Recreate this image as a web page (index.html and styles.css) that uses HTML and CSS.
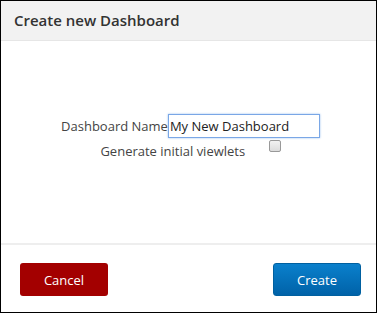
FILE: index.html
```html
<!DOCTYPE html>
<html>
  <head>
    <title>Create new Dashboard</title>
    <link rel="stylesheet" href="styles.css">
  </head>
  <body>
    <div class="dialog">
      <div class="dialog-header">Create new Dashboard</div>
      <div class="dialog-body">
        <div class="form-row">
          <label for="name">Dashboard Name</label><input type="text" id="name" value="My New Dashboard">
        </div>
        <div class="form-row">
          <label for="viewlets">Generate initial viewlets</label>
          <input type="checkbox" id="viewlets">
        </div>
      </div>
      <div class="dialog-footer">
        <button class="btn btn-cancel">Cancel</button>
        <button class="btn btn-create">Create</button>
      </div>
    </div>
  </body>
</html>
```

FILE: styles.css
```css
* {
  box-sizing: border-box;
}

body {
  margin: 0;
  padding: 0;
  font-family: "Open Sans", Arial, sans-serif;
  color: #333;
}

.dialog {
  width: 377px;
  height: 313px;
  border: 1px solid #000;
  display: flex;
  flex-direction: column;
  background: #fff;
}

.dialog-header {
  height: 40px;
  padding: 0 13px;
  background-color: #f2f2f2;
  border-bottom: 1px solid #e6e6e6;
  font-size: 15px;
  font-weight: 600;
  line-height: 38px;
  color: #333;
}

.dialog-body {
  flex: 1;
  padding: 73px 0 0 4px;
  text-align: center;
  border-bottom: 2px solid #eee;
  font-size: 13px;
}

.form-row {
  height: 25px;
  line-height: 24px;
}

.form-row label {
  color: #444;
}

input[type="text"] {
  width: 152px;
  height: 24px;
  padding: 0 1px;
  margin: 0;
  border: 1px solid #7aa7e6;
  box-shadow: 0 0 2px #9cc0f0;
  font-family: inherit;
  font-size: 13px;
  color: #222;
  vertical-align: top;
  outline: none;
}

input[type="checkbox"] {
  -webkit-appearance: none;
  appearance: none;
  width: 12px;
  height: 12px;
  margin: 1px 0 0 20px;
  border: 1px solid #999;
  border-radius: 2px;
  background: linear-gradient(#f2f2f2, #dcdcdc);
  vertical-align: top;
}

.dialog-footer {
  height: 67px;
  padding: 18px 15px 0 19px;
  display: flex;
  justify-content: space-between;
  align-items: flex-start;
}

.btn {
  width: 88px;
  height: 33px;
  padding-top: 2px;
  border: none;
  border-radius: 3px;
  color: #fff;
  font-family: inherit;
  font-size: 13px;
  cursor: pointer;
}

.btn-cancel {
  background-color: #a30000;
}

.btn-create {
  background: linear-gradient(#0a80cc, #0062a8);
  border: 1px solid #0060a0;
}
```
